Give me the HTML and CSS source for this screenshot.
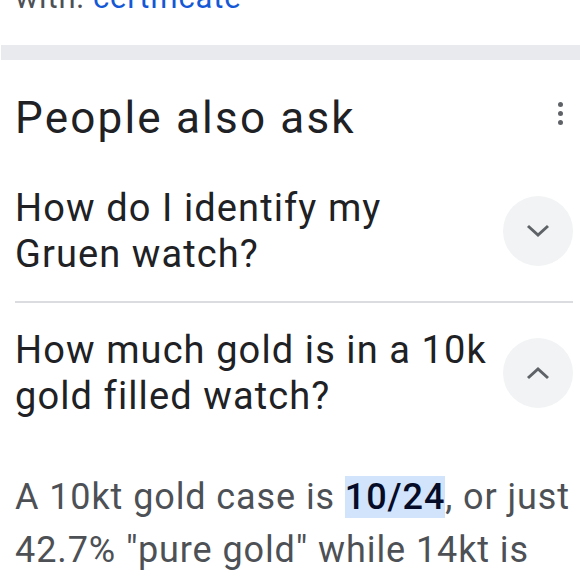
FILE: index.html
```html
<!DOCTYPE html>
<html lang="en">
<head>
  <meta charset="UTF-8">
  <title>People also ask</title>
  <link rel="stylesheet" href="styles.css">
</head>
<body>

  <!-- end of previous result -->
  <p class="snippet-tail">with: <a href="#">certificate</a></p>

  <div class="band"></div>

  <div class="paa">
    <div class="paa-head">
      <h2>People also ask</h2>
      <button class="more" aria-label="More options">
        <span></span><span></span><span></span>
      </button>
    </div>

    <div class="question">
      <div class="q-text">How do I identify my<br>Gruen watch?</div>
      <button class="toggle" aria-label="Expand">
        <svg viewBox="0 0 24 16"><path d="M2 3l10 9 10-9" fill="none" stroke="#5f6368" stroke-width="3"/></svg>
      </button>
    </div>

    <div class="question open">
      <div class="q-text">How much gold is in a 10k<br>gold filled watch?</div>
      <button class="toggle" aria-label="Collapse">
        <svg viewBox="0 0 24 16"><path d="M2 13l10-9 10 9" fill="none" stroke="#5f6368" stroke-width="3"/></svg>
      </button>
    </div>

    <div class="answer">
      A 10kt gold case is <span class="hl">10/24</span>, or just 42.7% "pure gold" while 14kt is
    </div>
  </div>

</body>
</html>
```

FILE: styles.css
```css
body {
  margin: 0;
  font-family: Roboto, "Noto Sans", sans-serif;
  background: #fff;
  color: #202124;
}

.snippet-tail {
  margin: -29px 0 0;
  padding: 0 15px;
  font-size: 31px;
  line-height: 53px;
  letter-spacing: 0.8px;
  color: #4d5156;
}

.snippet-tail a {
  color: #1558d6;
  text-decoration: none;
}

.band {
  height: 15px;
  margin-top: 21px;
  margin-left: 1px;
  background: #e8eaed;
}

.paa {
  padding: 0 7px 0 15px;
}

.paa-head {
  display: flex;
  justify-content: space-between;
  align-items: flex-start;
  padding: 33px 0 18px;
}

.paa-head h2 {
  margin: 0;
  font-size: 44px;
  font-weight: 400;
  line-height: 50px;
  letter-spacing: 2.2px;
  color: #202124;
}

.more {
  display: flex;
  flex-direction: column;
  gap: 4px;
  margin: 9px 10px 0 0;
  padding: 0;
  border: none;
  background: none;
}

.more span {
  width: 5px;
  height: 5px;
  border-radius: 50%;
  background: #5f6368;
}

.question {
  display: flex;
  align-items: center;
  justify-content: space-between;
  padding: 24px 0;
  border-bottom: 2px solid #dadce0;
}

.question.open {
  border-bottom: none;
}

.q-text {
  font-size: 38px;
  line-height: 46px;
  letter-spacing: 1.1px;
  white-space: nowrap;
  color: #202124;
}

.toggle {
  flex: none;
  display: flex;
  align-items: center;
  justify-content: center;
  width: 70px;
  height: 70px;
  padding: 0;
  border: none;
  border-radius: 50%;
  background: #f1f3f4;
}

.toggle svg {
  width: 24px;
  height: 16px;
}

.answer {
  padding-top: 28px;
  font-size: 36px;
  line-height: 53px;
  letter-spacing: 0.9px;
  color: #4d5156;
}

.hl {
  background: #d2e3fc;
  color: #040c28;
  font-weight: 500;
}
```
